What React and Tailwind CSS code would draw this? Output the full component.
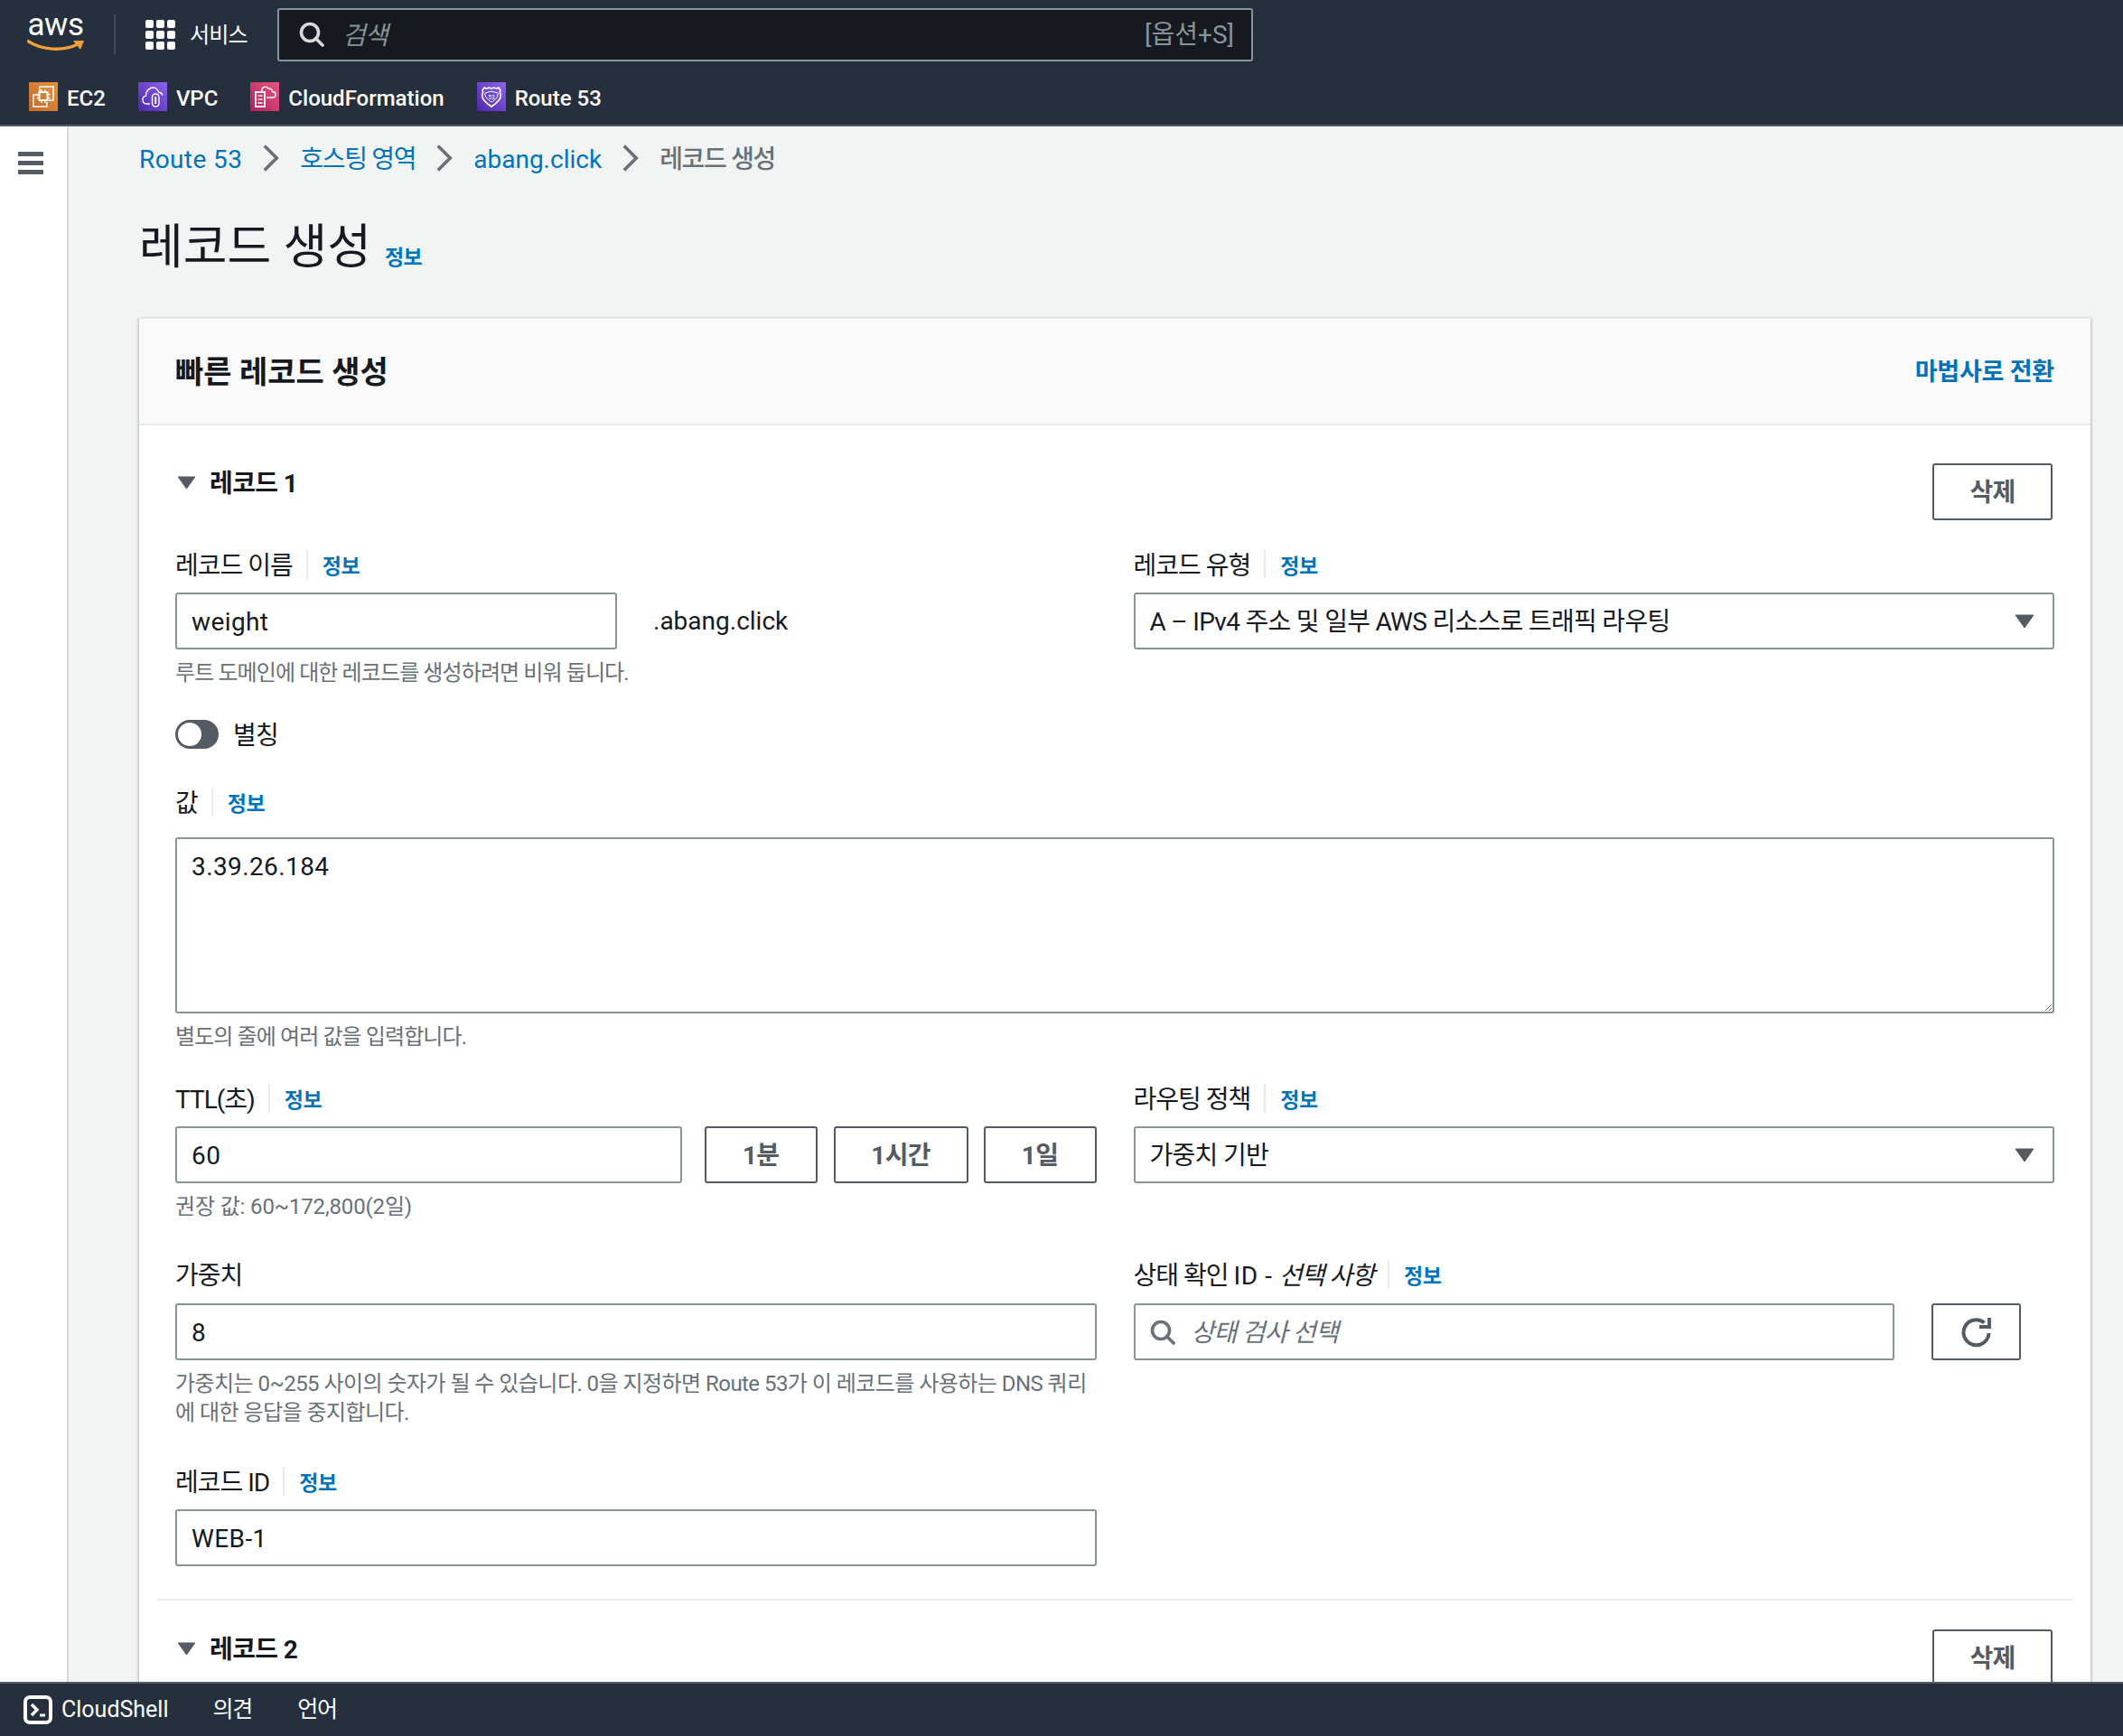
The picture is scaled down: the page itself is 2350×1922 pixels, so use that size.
import { useState } from "react";

const Info = () => <a className="text-[23px] font-bold tracking-[-0.5px] text-[#0073bb] leading-9">정보</a>;

const Label = ({ children, info = true }) => (
  <div className="flex h-9 items-center text-[28px] tracking-[-1px] text-[#16191f]">
    <span className="translate-y-[2px]">{children}</span>
    {info && <span className="ml-[15px] mr-[16px] h-8 w-0.5 bg-[#eaeded]" />}
    {info && <span className="translate-y-px"><Info /></span>}
  </div>
);

const Help = ({ children, className = "", tracking = "tracking-[-0.9px]" }) => (
  <p className={`translate-y-[2px] text-[24px] leading-8 text-[#687078] ${tracking} ${className}`}>{children}</p>
);

const TextInput = ({ value, className = "" }) => (
  <input
    defaultValue={value}
    className={`h-[63px] rounded-[3px] border-2 border-[#879596] bg-white px-4 pt-[2px] text-[28px] tracking-[0.4px] text-[#16191f] outline-none ${className}`}
  />
);

const Btn = ({ children, className = "" }) => (
  <button className={`flex h-[63px] items-center justify-center rounded-[3px] border-2 border-[#545b64] bg-white pt-[2px] text-[28px] font-bold tracking-[-0.7px] text-[#545b64] ${className}`}>
    {children}
  </button>
);

const SearchIcon = ({ className, color }) => (
  <svg viewBox="0 0 28 28" className={className} fill="none" stroke={color} strokeWidth="3.6">
    <circle cx="12" cy="12" r="9.5" />
    <path d="M18.5 18.5 26 26" strokeLinecap="round" />
  </svg>
);

const Caret = ({ className = "" }) => (
  <svg viewBox="0 0 22 16" className={className}>
    <path d="M1 1h20L11 15z" fill="#545b64" stroke="#545b64" strokeLinejoin="round" />
  </svg>
);

const Select = ({ children }) => (
  <div className="flex h-[63px] items-center justify-between rounded-[3px] border-2 border-[#879596] bg-white pl-4 pr-[20px] text-[28px] tracking-[-0.7px] text-[#16191f]">
    <span className="translate-y-px">{children}</span>
    <Caret className="h-4 w-[22px]" />
  </div>
);

const Crumb = () => (
  <svg viewBox="0 0 20 34" className="h-[34px] w-[18px]" fill="none" stroke="#687078" strokeWidth="4">
    <path d="M2 2l15 15L2 32" />
  </svg>
);

const Service = ({ from, to, label, children, className = "" }) => (
  <div className={`flex items-center gap-2.5 ${className}`}>
    <span className={`flex size-8 items-center justify-center bg-linear-to-tr ${from} ${to}`}>
      <svg viewBox="0 0 32 32" className="size-8" fill="none" stroke="#fff" strokeWidth="1.4">{children}</svg>
    </span>
    <span className="translate-y-[2px] text-[24px] font-medium text-white">{label}</span>
  </div>
);

const RecordHead = ({ title }) => (
  <div className="flex items-start justify-between">
    <div className="flex h-[42px] items-center">
      <Caret className="ml-[2px] h-[15px] w-[21px]" />
      <span className="ml-[15px] translate-y-[2px] text-[28px] font-bold tracking-[-0.6px] text-[#16191f]">{title}</span>
    </div>
    <Btn className="mr-[2px] w-[133px]">삭제</Btn>
  </div>
);

const navIcons = {
  ec2: (
    <>
      <path d="M12 10V5h15v15h-5" />
      <path d="M10 14H5v13h15v-5" />
      <rect x="11.5" y="11" width="9" height="9" strokeWidth="2" />
      <path d="M14 8v3M18 8v3M14 20v3M18 20v3M8.5 13.5h3M8.5 17.5h3M20.5 13.5h3M20.5 17.5h3" />
    </>
  ),
  vpc: (
    <>
      <path d="M13 24H9.5a4.5 4.5 0 0 1-1-8.9C8.5 9 13 6 16.5 6c3.5 0 5.5 3 6 5 2 .3 4 1.500 4.500 3.500" />
      <rect x="15.500" y="13" width="7.500" height="14" rx="3.700" />
      <path d="M19.200 16v8" strokeWidth="1.800" />
    </>
  ),
  cf: (
    <>
      <rect x="6" y="11" width="10" height="16" strokeWidth="1.800" />
      <path d="M8.500 15h5M8.500 19h5M8.500 23h5" />
      <path d="M13 11V8c0-3 5-4 7-1 3-.5 4.500 1.500 4.500 3.500 2.500 0 3.500 1.500 3.500 3.500s-1.500 3-3.500 3H18" />
    </>
  ),
  r53: (
    <>
      <path d="M8 6c2 1 4 1 5 0l3 1 3-1c1 1 3 1 5 0l2 3c-1 1-1 2 0 4 2 5-4 10-10 14C10 23 4 18 6 13c1-2 1-3 0-4z" strokeWidth="1.600" />
      <path d="M16 10l7 2c1 4-3 8-7 10-4-2-8-6-7-10z" strokeWidth="1" />
      <text x="16" y="18.500" fill="#fff" stroke="none" fontSize="6.500" textAnchor="middle">53</text>
    </>
  ),
};

export default function App() {
  const [alias] = useState(false);

  return (
    <div className="flex h-[1922px] flex-col overflow-hidden bg-[#f2f3f3] font-['Roboto','Noto_Sans_CJK_KR',sans-serif]">
      {/* Top nav */}
      <header className="h-[140px] shrink-0 border-b-2 border-[#545b64] bg-[#252f3e]">
        <div className="flex h-[76px] items-center">
          <div className="relative ml-[30px] h-[44px] w-[63px]">
            <span className="block -translate-y-[3px] text-center text-[35px] leading-[30px] tracking-[-0.5px] text-white">aws</span>
            <svg viewBox="0 0 64 14" className="absolute bottom-[3px] left-0 h-3.5 w-[64px]" fill="none">
              <path d="M0 2c16 11 40 12 56 4" stroke="#f2a03a" strokeWidth="3.400" />
              <path d="M51 2h12l-4 10z" fill="#f2a03a" />
            </svg>
          </div>
          <span className="ml-[33px] h-[44px] w-0.5 bg-[#414d5c]" />
          <div className="ml-[33px] grid grid-cols-3 gap-[3px]">
            {Array.from({ length: 9 }).map((_, i) => (
              <span key={i} className="size-[9px] rounded-[2px] bg-white" />
            ))}
          </div>
          <span className="ml-[16px] w-[64px] translate-y-px text-[24px] tracking-[-0.8px] whitespace-nowrap text-white">서비스</span>
          <div className="ml-[33px] flex h-[59px] w-[1080px] items-center rounded-[3px] border-2 border-[#879596] bg-[#16191f] pr-[19px] pl-[22px]">
            <SearchIcon className="size-[28px]" color="#d5dbdb" />
            <span className="ml-[20px] flex-1 translate-y-[2px] text-[28px] tracking-[-0.7px] text-[#879596] italic">검색</span>
            <span className="translate-y-px text-[28px] text-[#879596]">[옵션+S]</span>
          </div>
        </div>
        <div className="flex h-[62px] items-center pl-[32px]">
          <Service from="from-[#c06a2c]" to="to-[#e8943a]" label="EC2">{navIcons.ec2}</Service>
          <Service from="from-[#4d27a8]" to="to-[#8f62f2]" label="VPC" className="ml-[36px]">{navIcons.vpc}</Service>
          <Service from="from-[#b01e5c]" to="to-[#e8557f]" label="CloudFormation" className="ml-[36px]">{navIcons.cf}</Service>
          <Service from="from-[#4d27a8]" to="to-[#8f62f2]" label="Route 53" className="ml-[36px]">{navIcons.r53}</Service>
        </div>
      </header>

      <div className="flex min-h-0 flex-1">
        {/* Side rail */}
        <aside className="w-[76px] shrink-0 border-r-2 border-[#d5dbdb] bg-white pt-[28px] pl-5">
          <div className="flex w-7 flex-col gap-[5px]">
            <span className="h-[5px] bg-[#545b64]" />
            <span className="h-[5px] bg-[#545b64]" />
            <span className="h-[5px] bg-[#545b64]" />
          </div>
        </aside>

        <main className="min-w-0 flex-1 pr-[36px] pl-[78px]">
          {/* Breadcrumbs */}
          <nav className="flex h-[70px] items-center gap-[23px] text-[28px]">
            <a className="translate-y-[2px] tracking-[0.4px] text-[#0073bb]">Route 53</a>
            <Crumb />
            <a className="translate-y-[2px] tracking-[-1.3px] text-[#0073bb]">호스팅 영역</a>
            <Crumb />
            <a className="translate-y-[2px] text-[#0073bb]">abang.click</a>
            <Crumb />
            <span className="translate-y-[2px] font-medium tracking-[-1.3px] text-[#687078]">레코드 생성</span>
          </nav>

          <div className="mt-[30px] flex h-[68px] items-end">
            <h1 className="text-[53px] leading-[68px] text-[#16191f]">레코드 생성</h1>
            <span className="mb-[4px] ml-[15px]"><Info /></span>
          </div>

          {/* Card */}
          <section className="mt-[44px] border-t border-[#eaeded] bg-white shadow-[0_2px_2px_0_rgba(0,28,36,0.2),2px_0_2px_0_rgba(0,28,36,0.12),-2px_0_2px_0_rgba(0,28,36,0.12)]">
            <div className="flex h-[118px] items-center justify-between border-b-2 border-[#eaeded] bg-[#fafafa] px-10">
              <h2 className="translate-y-px text-[34px] font-bold text-[#16191f]">빠른 레코드 생성</h2>
              <a className="translate-y-px text-[27px] font-bold tracking-[-0.2px] text-[#0073bb]">마법사로 전환</a>
            </div>

            <div className="px-5">
              <div className="px-5 pt-[42px] pb-[36px]">
                <RecordHead title="레코드 1" />

                <div className="mt-[31px] grid grid-cols-2 gap-x-[41px]">
                  <div>
                    <Label>레코드 이름</Label>
                    <div className="mt-[13px] flex items-center">
                      <TextInput value="weight" className="w-[489px]" />
                      <span className="ml-10 text-[28px] text-[#16191f]">.abang.click</span>
                    </div>
                    <Help className="mt-2">루트 도메인에 대한 레코드를 생성하려면 비워 둡니다.</Help>
                  </div>
                  <div>
                    <Label>레코드 유형</Label>
                    <div className="mt-[13px]">
                      <Select>A – IPv4 주소 및 일부 AWS 리소스로 트래픽 라우팅</Select>
                    </div>
                  </div>
                </div>

                <div className="mt-[38px] flex h-8 items-center">
                  <span className={`flex h-8 w-12 items-center rounded-full bg-[#545b64] px-[3px] ${alias ? "justify-end" : ""}`}>
                    <span className="size-[26px] rounded-full bg-white" />
                  </span>
                  <span className="ml-[16px] translate-y-[2px] text-[28px] tracking-[-0.8px] text-[#16191f]">별칭</span>
                </div>

                <div className="mt-[41px]"><Label>값</Label></div>
                <textarea
                  defaultValue="3.39.26.184"
                  className="mt-[21px] block h-[195px] w-full rounded-[3px] border-2 border-[#879596] bg-white px-4 pt-[14px] pb-[10px] text-[28px] leading-[34px] tracking-[0.4px] text-[#16191f] outline-none"
                />
                <Help className="mt-2">별도의 줄에 여러 값을 입력합니다.</Help>

                <div className="mt-9 grid grid-cols-2 gap-x-[41px]">
                  <div>
                    <Label>TTL(초)</Label>
                    <div className="mt-[13px] flex">
                      <TextInput value="60" className="w-[561px]" />
                      <Btn className="ml-[25px] w-[125px]">1분</Btn>
                      <Btn className="ml-[18px] w-[149px]">1시간</Btn>
                      <Btn className="ml-[17px] w-[125px]">1일</Btn>
                    </div>
                    <Help className="mt-2" tracking="tracking-[-0.15px]">권장 값: 60~172,800(2일)</Help>
                  </div>
                  <div>
                    <Label>라우팅 정책</Label>
                    <div className="mt-[13px]">
                      <Select>가중치 기반</Select>
                    </div>
                  </div>

                  <div className="mt-[43px]">
                    <Label info={false}>가중치</Label>
                    <TextInput value="8" className="mt-[14px] block w-full" />
                    <Help className="mt-2" tracking="tracking-[-0.55px]">가중치는 0~255 사이의 숫자가 될 수 있습니다. 0을 지정하면 Route 53가 이 레코드를 사용하는 DNS 쿼리에 대한 응답을 중지합니다.</Help>
                  </div>
                  <div className="mt-[43px]">
                    <Label>
                      상태 확인 <span className="tracking-[0.6px]">ID - </span><span className="italic">선택 사항</span>
                    </Label>
                    <div className="mt-[14px] flex items-center">
                      <div className="flex h-[63px] w-[842px] items-center rounded-[3px] border-2 border-[#879596] bg-white pl-4">
                        <SearchIcon className="size-[28px]" color="#687078" />
                        <input
                          placeholder="상태 검사 선택"
                          className="ml-[18px] flex-1 bg-transparent pt-[3px] text-[28px] tracking-[-0.7px] italic outline-none placeholder:text-[#687078]"
                        />
                      </div>
                      <Btn className="ml-[41px] w-[99px]">
                        <svg viewBox="0 0 33 33" className="size-[33px]" fill="none" stroke="#545b64" strokeWidth="4">
                          <path d="M25.500 5.500A14 14 0 1 0 30.500 17" />
                          <path d="M31 0v10H20" />
                        </svg>
                      </Btn>
                    </div>
                  </div>

                  <div className="mt-11">
                    <div className="pl-0"><Label>레코드 ID</Label></div>
                    <TextInput value="WEB-1" className="mt-[13px] block w-full" />
                  </div>
                </div>
              </div>

              <div className="border-t-2 border-[#eaeded] px-5 pt-8">
                <RecordHead title="레코드 2" />
              </div>
            </div>
          </section>
        </main>
      </div>

      {/* Footer */}
      <footer className="relative z-10 flex h-[60px] shrink-0 items-center border-t-2 border-[#545b64] bg-[#252f3e] pl-[26px] text-[25px] text-white">
        <svg viewBox="0 0 32 32" className="size-8" fill="none">
          <rect x="2" y="2" width="28" height="28" rx="5" stroke="#fff" strokeWidth="4" />
          <path d="M9 10l6 6-6 6" stroke="#fff" strokeWidth="3.400" />
          <path d="M18 22h6" stroke="#fff" strokeWidth="3" />
        </svg>
        <span className="ml-[10px]">CloudShell</span>
        <span className="ml-[49px] tracking-[-1.2px]">의견</span>
        <span className="ml-[50px] tracking-[-1.2px]">언어</span>
      </footer>
    </div>
  );
}
